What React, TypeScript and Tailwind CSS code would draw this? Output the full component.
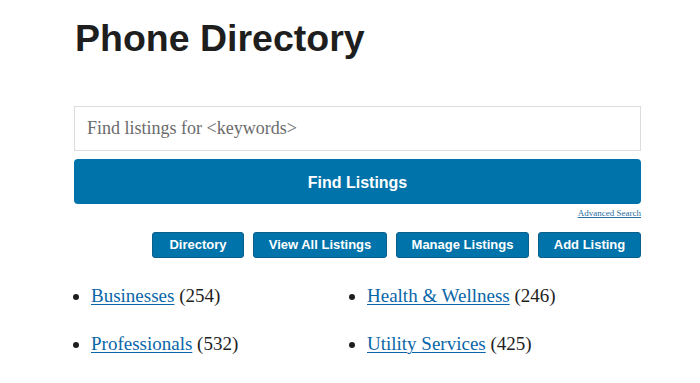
import React from "react";

const serif = { fontFamily: '"Liberation Serif", "Times New Roman", serif' };
const sans = { fontFamily: '"Liberation Sans", Arial, sans-serif' };

const buttons: { label: string; w: string }[] = [
  { label: "Directory", w: "w-[92px]" },
  { label: "View All Listings", w: "w-[134px]" },
  { label: "Manage Listings", w: "w-[133px]" },
  { label: "Add Listing", w: "w-[103px]" },
];

const cats = [
  { name: "Businesses", n: 254 },
  { name: "Health & Wellness", n: 246 },
  { name: "Professionals", n: 532 },
  { name: "Utility Services", n: 425 },
];

export default function App() {
  return (
    <div className="w-[700px] h-[383px] bg-white overflow-hidden">
      <div className="ml-[74px] w-[567px] pt-[20px]">
        <h1
          className="text-[37.5px] leading-none font-bold text-[#1e1e1e] ml-[1px]"
          style={sans}
        >
          Phone Directory
        </h1>
        <div className="mt-[48.5px] h-[45px] border border-[#dcdcdc] flex items-center pl-[12px]">
          <span className="text-[18px] text-[#6b6b6b]" style={serif}>
            Find listings for &lt;keywords&gt;
          </span>
        </div>
        <div
          className="mt-[8px] h-[45px] rounded-[4px] bg-[#0073aa] flex items-center justify-center text-white font-bold text-[16px] pt-[2px]"
          style={sans}
        >
          Find Listings
        </div>
        <div className="flex justify-end mt-[2px] h-[14px]">
          <a
            className="text-[9px] text-[#2b6f9e] underline leading-[14px]"
            style={serif}
          >
            Advanced Search
          </a>
        </div>
        <div className="flex justify-end gap-[9px] mt-[12px]">
          {buttons.map((b) => (
            <div
              key={b.label}
              className={`${b.w} h-[26px] rounded-[3px] bg-[#0073aa] border border-[#0a5f8c] flex items-center justify-center text-white font-bold text-[13px]`}
              style={sans}
            >
              {b.label}
            </div>
          ))}
        </div>
        <ul
          className="grid grid-cols-[276px_1fr] mt-[25px] text-[19px] text-[#1e1e1e] list-disc"
          style={serif}
        >
          {cats.map((c) => (
            <li key={c.name} className="ml-[17px] h-[48px] leading-[26px]">
              <a className="text-[#0a66a8] underline underline-offset-[2px] decoration-1">
                {c.name}
              </a>{" "}
              ({c.n})
            </li>
          ))}
        </ul>
      </div>
    </div>
  );
}
